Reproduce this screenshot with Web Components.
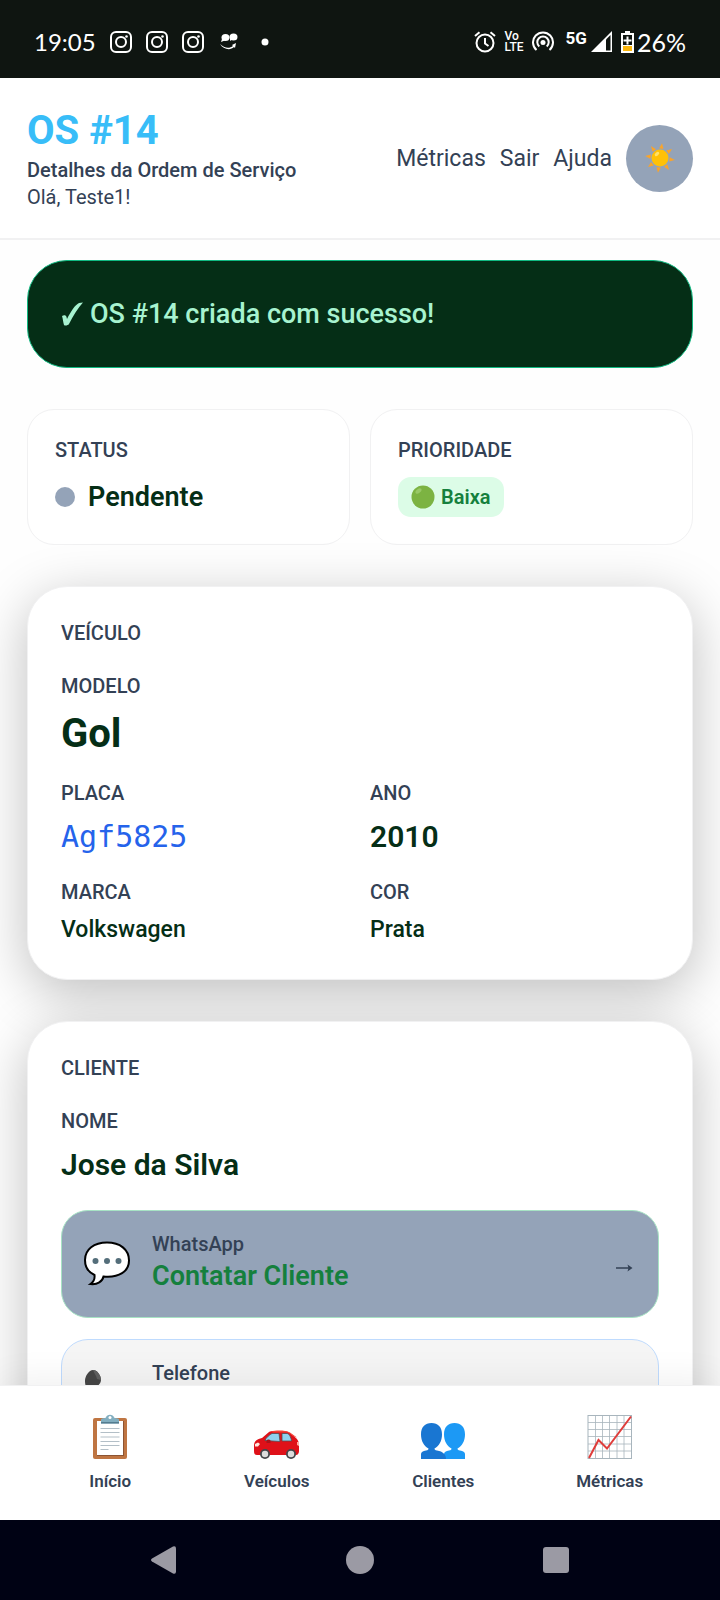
<!DOCTYPE html>
<html lang="pt-BR">
<head>
<meta charset="utf-8">
<meta name="viewport" content="width=device-width, initial-scale=1">
<title>OS #14</title>
<style>
    :root {
        --ink: #052e16;
        --muted: #334155;
        --slate: #94a3b8;
        --line: #f1f1f2;
    }
    body {
        margin: 0;
        height: 100vh;
        display: flex;
        flex-direction: column;
        background: #fefefe;
        color: var(--muted);
        font-family: Roboto, "Liberation Sans", sans-serif;
        font-size: 20px;
        line-height: 27px;
    }
    main {
        flex: 1;
        min-height: 0;
        overflow: hidden;
        padding: 20px 27px;
        display: flex;
        flex-direction: column;
        gap: 41px;
    }
    main > * {
        flex-shrink: 0;
    }
    .summary {
        display: grid;
        grid-template-columns: 1fr 1fr;
        gap: 20px;
    }
    .pair {
        display: grid;
        grid-template-columns: 1fr 1fr;
        gap: 20px;
    }
    .contacts {
        display: grid;
        gap: 21px;
        padding-top: 3px;
    }
</style>
</head>
<body>
    <status-bar></status-bar>
    <page-header>
        <span slot="title">OS #14</span>
        <span slot="subtitle">Detalhes da Ordem de Serviço</span>
        <span slot="greeting">Olá, Teste1!</span>
    </page-header>
    <main>
        <success-alert>OS #14 criada com sucesso!</success-alert>
        <div class="summary">
            <summary-card label="STATUS"><status-value>Pendente</status-value></summary-card>
            <summary-card label="PRIORIDADE"><priority-badge>Baixa</priority-badge></summary-card>
        </div>
        <detail-card heading="VEÍCULO">
            <detail-field label="MODELO" kind="title">Gol</detail-field>
            <div class="pair">
                <detail-field label="PLACA" kind="code">Agf5825</detail-field>
                <detail-field label="ANO" kind="large">2010</detail-field>
                <detail-field label="MARCA">Volkswagen</detail-field>
                <detail-field label="COR">Prata</detail-field>
            </div>
        </detail-card>
        <detail-card heading="CLIENTE">
            <detail-field label="NOME" kind="large">Jose da Silva</detail-field>
            <div class="contacts">
                <contact-link kind="whatsapp" label="WhatsApp">Contatar Cliente</contact-link>
                <contact-link kind="phone" label="Telefone"></contact-link>
            </div>
        </detail-card>
    </main>
    <bottom-nav></bottom-nav>
    <system-nav></system-nav>

<script>
const instagram = `
<svg width="22" height="22" viewBox="0 0 22 22" fill="none" stroke="#fff" stroke-width="2">
    <rect x="1" y="1" width="20" height="20" rx="5"/>
    <circle cx="11" cy="11" r="5"/>
    <circle cx="16.5" cy="5.5" r="1.3" fill="#fff" stroke="none"/>
</svg>`;

const emoji = {
    clipboard: `
    <svg viewBox="0 0 48 48">
        <rect x="7" y="5" width="34" height="41" rx="2" fill="#bf7542"/>
        <path d="M11 8h26v34H11z" fill="#fff"/>
        <path d="M37 8v34H11v1h27V8z" fill="#8d5433"/>
        <g stroke="#b3bfc7" stroke-width="1"><path d="M14.500 15.500h19M14.500 19.500h19M14.500 24h19M14.500 28.500h19M14.500 32.500h19M14.500 36.500h8"/></g>
        <path d="M15 6.500c0-1.500 4-1 5-2 .6-3.600 7.400-3.600 8 0 1 1 5 .5 5 2v4H15z" fill="#82aec0"/>
        <path d="M15 9h18v1.500H15z" fill="#547d91"/>
        <circle cx="24" cy="4.600" r="1.500" fill="#fff"/>
    </svg>`,
    car: `
    <svg viewBox="0 0 48 48">
        <path d="M1 33c0-5 3-7 8-8l7-6c1-.8 3-1 5-1h9c3 0 5 .7 7 2l6 5c2 2 3 4 3 8v5c0 2-1 4-3 4H4c-2 0-3-1-3-4z" fill="#df1119"/>
        <path d="M18 18.500c5-1.400 14-1.500 19 1l7 5-3-1-6-4H20z" fill="#f44336"/>
        <path d="M12 27.500c1-3 5-6 7-7h7l1 8z" fill="#8fd2ef" stroke="#554c50" stroke-width=".8"/>
        <path d="M29 20.500h5c2 0 4 3.500 4.500 7.500H29z" fill="#8fd2ef" stroke="#554c50" stroke-width=".8"/>
        <path d="M13.500 28c0-2 4-2 4 0v2h-4z" fill="#a9131a"/>
        <path d="M2 31l3-1.500 2 1.500-2 2.500H2z" fill="#ffe8df"/>
        <path d="M46 29v4l-2-1v-3z" fill="#ffaea4"/>
        <circle cx="12" cy="41" r="5" fill="#46474b"/><circle cx="12" cy="41" r="3.200" fill="#ddd"/>
        <circle cx="38" cy="41" r="5" fill="#46474b"/><circle cx="38" cy="41" r="3.200" fill="#ddd"/>
    </svg>`,
    people: `
    <svg viewBox="0 0 48 48">
        <path d="M25 46v-5c0-2 2-3 5-3.500 2-.4 2.500-1 2.500-2C28 33 25 28 25 21.500 25 14 29 10 35.500 10S46 14 46 21.500c0 6.500-3 11.500-7.500 14 0 1 .5 1.600 2.500 2 3 .5 5 1.500 5 3.500v5z" fill="#1c99f5"/>
        <path d="M2 46v-5c0-2 2-3 5-3.500 2-.4 2.500-1 2.500-2C5 33 2 28 2 21.500 2 14 6 10 12.500 10S23 14 23 21.500c0 6.500-3 11.500-7.500 14 0 1 .5 1.600 2.500 2 6 1 9 4 9 8.500z" fill="#1976d2"/>
    </svg>`,
    chart: `
    <svg viewBox="0 0 48 48" fill="none">
        <path d="M2 2.500h43v43H2z" fill="#fff"/>
        <path d="M9.500 2v44M16.500 2v44M23.500 2v44M31 2v44M38 2v44M2 9.500h44M2 16.500h44M2 23.500h44M2 31h44M2 38h44" stroke="#a8b5bd" stroke-width=".8"/>
        <rect x="2" y="2.500" width="43.500" height="43" stroke="#a8b5bd"/>
        <path d="M3 45l9.500-18L21 35.500 45 3.500" stroke="#df3d3b" stroke-width="2"/>
    </svg>`,
    bubble: `
    <svg viewBox="0 0 48 48">
        <path d="M24 2.500C11 2.500 2 9.500 2 20c0 7 3 12 9.500 15 .5 4-1 7-4 9 7 .8 12-2.500 13-7.500C36 38 46 31.500 46 20.500 46 9.500 37 2.500 24 2.500z" fill="#fff" stroke="#000" stroke-width="2"/>
        <g fill="#546e7a"><circle cx="12.500" cy="21" r="3"/><circle cx="24" cy="21" r="3"/><circle cx="35.500" cy="21" r="3"/></g>
    </svg>`,
    phone: `
    <svg viewBox="0 0 48 48">
        <path d="M10 1c4 0 8 5 8 10 0 3-2 4-3 6-1 4 9 15 13 15 3 0 3-4 6-4 4 0 9 5 9 9 0 4-4 7-9 7C19 44 2 26 2 12c0-5 4-11 8-11z" fill="#464646"/>
        <path d="M10 1c4 0 8 5 8 10l-4-1c-1-4-3-6-4-9z" fill="#606060"/>
    </svg>`,
    sun: `
    <svg viewBox="0 0 32 32">
        <g fill="#f9a42b" transform="rotate(8 16 16)">
            <path d="M16 1l2.200 5.500h-4.400z"/>
            <path d="M16 31l2.200-5.500h-4.400zM1 16l5.500-2.200v4.400zM31 16l-5.500-2.200v4.400z"/>
            <path d="M5.400 5.400l5.400 2.400-3 3zM26.600 5.400l-5.400 2.400 3 3zM5.400 26.600l5.400-2.400-3-3zM26.600 26.600l-5.400-2.400 3-3z"/>
        </g>
        <circle cx="16" cy="16" r="8.500" fill="#ffc107"/>
        <ellipse cx="13" cy="12" rx="2.600" ry="1.600" fill="#ffe168" transform="rotate(-40 13 12)"/>
    </svg>`
};

class StatusBar extends HTMLElement {
    constructor(){
        super();
        this.attachShadow({mode:'open'})
        this.shadowRoot.innerHTML = `
        <style>
            :host {
                display: flex;
                flex-shrink: 0;
                justify-content: space-between;
                align-items: center;
                height: 78px;
                padding: 6px 34px 0;
                box-sizing: border-box;
                background: #0f1511;
                color: #fff;
                font: 24px/30px Lato, sans-serif;
            }
            div {
                display: flex;
                align-items: center;
            }
            svg {
                display: block;
            }
            .left {
                gap: 14px;
            }
            .right {
                gap: 8px;
            }
            .charge {
                gap: 3px;
                font-size: 25px;
            }
            .lte {
                font: 500 12px/11px Roboto, sans-serif;
            }
            .lte span {
                display: block;
            }
            .net {
                font: 700 17px/30px Roboto, sans-serif;
                padding: 0 0 8px 4px;
            }
            .net + svg {
                margin-left: -4px;
            }
        </style>
        <div class="left">
            <span>19:05</span>
            ${instagram}${instagram}${instagram}
            <svg width="22" height="22" viewBox="0 0 22 22" fill="#fff">
                <ellipse cx="7.500" cy="6.500" rx="4" ry="3.500"/><ellipse cx="15.500" cy="6" rx="4" ry="3.500"/>
                <path d="M4 8l4 1-5 2zM12 6l3 2-3 2z"/>
                <path d="M2 13c4 4 9 5 13 2l-1-1 4-2-1 5-1-1C12 20 5 18 2 13z"/>
            </svg>
            <svg width="22" height="22" viewBox="0 0 22 22"><circle cx="11" cy="11" r="3.500" fill="#fff"/></svg>
        </div>
        <div class="right">
            <svg width="22" height="22" viewBox="0 0 22 22" fill="none" stroke="#fff" stroke-width="2">
                <circle cx="11" cy="12" r="8.500"/><path d="M11 7v5.500l3.500 2.500M1 5l4.500-3.800M21 5l-4.500-3.800"/>
            </svg>
            <span class="lte"><span>Vo</span><span>LTE</span></span>
            <svg width="22" height="22" viewBox="0 0 22 22" fill="none" stroke="#fff" stroke-width="2">
                <path d="M4.500 19a10 10 0 1 1 13 0M7.300 15.500a5.700 5.700 0 1 1 7.400 0"/><circle cx="11" cy="11.500" r="2.500" fill="#fff" stroke="none"/>
            </svg>
            <span class="net">5G</span>
            <svg width="22" height="22" viewBox="0 0 22 22">
                <path d="M0 21L21 0v21z" fill="#fff"/><path d="M15 8.500l4.500-4.500v15.500H15z" fill="#0f1511"/>
            </svg>
            <div class="charge">
                <svg width="13" height="22" viewBox="0 0 13 22">
                    <path d="M4 0h5v2h4v20H0V2h4z" fill="#fff"/><path d="M2 15h9v5H2z" fill="#fbb60c"/>
                    <path d="M2 4h9v10H2z" fill="#0f1511"/><path d="M5.500 5.500h2v3h3v2h-3v3h-2v-3h-3v-2h3z" fill="#fff"/>
                </svg>
                <span>26%</span>
            </div>
        </div>
        `;
    }
}

class PageHeader extends HTMLElement {
    constructor(){
        super();
        this.attachShadow({mode:'open'})
        this.shadowRoot.innerHTML = `
        <style>
            :host {
                display: flex;
                flex-shrink: 0;
                align-items: center;
                justify-content: space-between;
                padding: 27px;
                background: #fff;
                border-bottom: 2px solid var(--line);
            }
            h1 {
                margin: 0;
                color: #38bdf8;
                font-size: 40px;
                line-height: 52px;
            }
            p {
                margin: 0;
            }
            .subtitle {
                font-weight: 500;
            }
            nav {
                display: flex;
                align-items: center;
                gap: 14px;
                font-size: 23px;
            }
            a {
                color: inherit;
                text-decoration: none;
            }
            button {
                font: inherit;
                color: inherit;
                padding: 0;
                border: 0;
                background: none;
            }
            .theme {
                display: grid;
                place-items: center;
                width: 67px;
                height: 67px;
                border-radius: 50%;
                background: var(--slate);
            }
            svg {
                width: 32px;
                height: 32px;
            }
        </style>
        <div>
            <h1><slot name="title"></slot></h1>
            <p class="subtitle"><slot name="subtitle"></slot></p>
            <p><slot name="greeting"></slot></p>
        </div>
        <nav>
            <a href="#metricas">Métricas</a>
            <button>Sair</button>
            <a href="#ajuda">Ajuda</a>
            <button class="theme" aria-label="Tema">${emoji.sun}</button>
        </nav>
        `;
    }
}

class SuccessAlert extends HTMLElement {
    constructor(){
        super();
        this.attachShadow({mode:'open'})
        this.shadowRoot.innerHTML = `
        <style>
            :host {
                display: flex;
                align-items: center;
                gap: 7px;
                padding: 33px;
                border: 1px solid #10b981;
                border-radius: 40px;
                background: var(--ink);
                color: #a7f3d0;
                font-size: 27px;
                font-weight: 500;
                line-height: 40px;
            }
            svg {
                width: 22px;
                height: 24px;
            }
        </style>
        <svg viewBox="0 0 22 24"><path d="M1 14c2-1.500 4-1 4.500 1l.5 2C10 9 14 3 18 1l4-.5C17 6 12 14 8 22c-1 1.500-4 2-5 1C2 20 2 17 1 14z" fill="currentColor"/></svg>
        <slot></slot>
        `;
    }
}

class SummaryCard extends HTMLElement {
    constructor(){
        super();
        this.attachShadow({mode:'open'})
        this.shadowRoot.innerHTML = `
        <style>
            :host {
                display: flex;
                flex-direction: column;
                align-items: flex-start;
                gap: 13px;
                padding: 27px;
                border: 1px solid var(--line);
                border-radius: 27px;
                background: #fff;
            }
            .label {
                font-weight: 500;
            }
        </style>
        <span class="label">${this.getAttribute('label')}</span>
        <slot></slot>
        `;
    }
}

class StatusValue extends HTMLElement {
    constructor(){
        super();
        this.attachShadow({mode:'open'})
        this.shadowRoot.innerHTML = `
        <style>
            :host {
                display: flex;
                align-items: center;
                gap: 13px;
                color: var(--ink);
                font-size: 27px;
                font-weight: 600;
                line-height: 40px;
            }
            i {
                width: 20px;
                height: 20px;
                border-radius: 50%;
                background: var(--slate);
            }
        </style>
        <i></i><slot></slot>
        `;
    }
}

class PriorityBadge extends HTMLElement {
    constructor(){
        super();
        this.attachShadow({mode:'open'})
        this.shadowRoot.innerHTML = `
        <style>
            :host {
                display: flex;
                align-items: center;
                gap: 6px;
                padding: 0 13px;
                border-radius: 13px;
                background: #dcfce7;
                color: #15803d;
                font-weight: 600;
                line-height: 40px;
            }
            svg {
                width: 24px;
                height: 24px;
            }
        </style>
        <svg viewBox="0 0 24 24"><circle cx="12" cy="12" r="11.500" fill="#7cb342"/><ellipse cx="7.500" cy="6" rx="3.500" ry="2" fill="#aed581" opacity=".6" transform="rotate(-40 7.500 6)"/></svg>
        <slot></slot>
        `;
    }
}

class DetailCard extends HTMLElement {
    constructor(){
        super();
        this.attachShadow({mode:'open'})
        this.shadowRoot.innerHTML = `
        <style>
            :host {
                display: block;
                padding: 33px;
                border: 1px solid var(--line);
                border-radius: 40px;
                background: #fff;
                box-shadow: 0 13px 53px rgba(0,0,0,0.25);
            }
            h2 {
                margin: 0 0 26px;
                font-size: 20px;
                font-weight: 500;
            }
            .content {
                display: flex;
                flex-direction: column;
                gap: 20px;
            }
        </style>
        <h2>${this.getAttribute('heading')}</h2>
        <div class="content"><slot></slot></div>
        `;
    }
}

class DetailField extends HTMLElement {
    constructor(){
        super();
        this.attachShadow({mode:'open'})
        this.shadowRoot.innerHTML = `
        <style>
            :host {
                display: flex;
                flex-direction: column;
                gap: 7px;
            }
            .label {
                font-weight: 500;
            }
            .value {
                color: var(--ink);
                font-size: 23px;
                font-weight: 500;
                line-height: 33px;
            }
            :host([kind=title]) .value {
                font-size: 40px;
                font-weight: 700;
                line-height: 53px;
            }
            :host([kind=large]) .value,
            :host([kind=code]) .value {
                font-size: 30px;
                font-weight: 600;
                line-height: 45px;
            }
            :host([kind=code]) .value {
                color: #2563eb;
                font-family: "DejaVu Sans Mono", monospace;
                font-weight: 400;
            }
        </style>
        <span class="label">${this.getAttribute('label')}</span>
        <span class="value"><slot></slot></span>
        `;
    }
}

class ContactLink extends HTMLElement {
    constructor(){
        super();
        this.attachShadow({mode:'open'})
        const phone = this.getAttribute('kind') === 'phone'
        this.shadowRoot.innerHTML = `
        <style>
            :host {
                display: block;
            }
            a {
                display: flex;
                align-items: center;
                gap: 21px;
                padding: 21px;
                border: 1px solid #a7e3c4;
                border-radius: 27px;
                background: var(--slate);
                color: inherit;
                text-decoration: none;
            }
            :host([kind=phone]) a {
                border-color: #bfdbfe;
                background: #f5f5f5;
            }
            .icon svg {
                display: block;
                width: 48px;
                height: 48px;
            }
            .text {
                flex: 1;
                font-weight: 500;
                line-height: 24px;
            }
            .text span {
                display: block;
            }
            .text .action {
                min-height: 40px;
                color: #15803d;
                font-size: 27px;
                font-weight: 600;
                line-height: 40px;
            }
            .arrow {
                width: 22px;
                height: 20px;
            }
        </style>
        <a href="#contato">
            <span class="icon">${phone ? emoji.phone : emoji.bubble}</span>
            <span class="text"><span>${this.getAttribute('label')}</span><span class="action"><slot></slot></span></span>
            <svg class="arrow" viewBox="0 0 22 20"><path d="M1 14h13" fill="none" stroke="currentColor" stroke-width="1.500"/><path d="M12.500 10.500L17.500 14l-5 3.500 1-3.500z" fill="currentColor"/></svg>
        </a>
        `;
    }
}

class BottomNav extends HTMLElement {
    constructor(){
        super();
        this.attachShadow({mode:'open'})
        const items = [
            ['clipboard', 'Início'],
            ['car', 'Veículos'],
            ['people', 'Clientes'],
            ['chart', 'Métricas']
        ]
        this.shadowRoot.innerHTML = `
        <style>
            :host {
                display: block;
                position: relative;
                flex-shrink: 0;
                padding: 27px;
                border-top: 1px solid var(--line);
                background: #fff;
                box-shadow: 0 -7px 33px rgba(0,0,0,0.06);
            }
            nav {
                display: grid;
                grid-template-columns: repeat(4, 1fr);
            }
            a {
                display: flex;
                flex-direction: column;
                align-items: center;
                gap: 8px;
                color: inherit;
                font-size: 17px;
                font-weight: 600;
                line-height: 24px;
                text-decoration: none;
            }
            svg {
                width: 48px;
                height: 48px;
            }
        </style>
        <nav>${items.map(([icon, text]) => `<a href="#${icon}">${emoji[icon]}<span>${text}</span></a>`).join('')}</nav>
        `;
    }
}

class SystemNav extends HTMLElement {
    constructor(){
        super();
        this.attachShadow({mode:'open'})
        this.shadowRoot.innerHTML = `
        <style>
            :host {
                display: grid;
                grid-template-columns: repeat(3, 1fr);
                position: relative;
                flex-shrink: 0;
                align-items: center;
                justify-items: center;
                height: 80px;
                padding: 0 66px;
                background: #000214;
            }
            button {
                padding: 0;
                border: 0;
                background: none;
            }
            svg {
                display: block;
                width: 28px;
                height: 28px;
                fill: #9b9aa4;
            }
        </style>
        <button aria-label="Voltar"><svg viewBox="0 0 28 28"><path d="M2 12.500Q0 14 2 15.500L23 27.500Q26 28.500 26 25.500V2.500Q26-.5 23 .5z"/></svg></button>
        <button aria-label="Tela inicial"><svg viewBox="0 0 28 28"><circle cx="14" cy="14" r="14"/></svg></button>
        <button aria-label="Recentes"><svg viewBox="0 0 28 28"><rect x="1" y="1" width="26" height="26" rx="3"/></svg></button>
        `;
    }
}

customElements.define('status-bar', StatusBar);
customElements.define('page-header', PageHeader);
customElements.define('success-alert', SuccessAlert);
customElements.define('summary-card', SummaryCard);
customElements.define('status-value', StatusValue);
customElements.define('priority-badge', PriorityBadge);
customElements.define('detail-card', DetailCard);
customElements.define('detail-field', DetailField);
customElements.define('contact-link', ContactLink);
customElements.define('bottom-nav', BottomNav);
customElements.define('system-nav', SystemNav);
</script>
</body>
</html>
